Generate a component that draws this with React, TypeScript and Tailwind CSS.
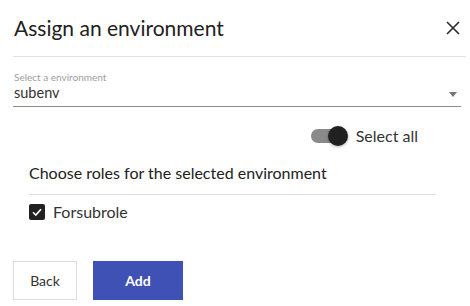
import React from "react";

const App: React.FC = () => {
  return (
    <div
      className="w-[470px] h-[306px] bg-white overflow-hidden text-[#222]"
      style={{ fontFamily: "Lato, 'Open Sans', sans-serif" }}
    >
      {/* header */}
      <div className="ml-[13px] mr-[4px] h-[57px] flex items-center justify-between border-b border-[#e3e3e3]">
        <h1 className="pl-[1px] text-[21px] leading-[28px] text-[#212121]">Assign an environment</h1>
        <button className="mr-[6px] w-[14px] h-[14px] flex items-center justify-center text-[#2b2b2b]">
          <svg width="14" height="14" viewBox="0 0 14 14" fill="none">
            <path d="M1 1L13 13M13 1L1 13" stroke="currentColor" strokeWidth="1.6" />
          </svg>
        </button>
      </div>

      {/* select */}
      <div className="ml-[13px] mr-[9px] mt-[14px]">
        <div className="pl-[1px] text-[10px] leading-[12px] text-[#9e9e9e]">Select a environment</div>
        <div className="h-[24px] flex items-start justify-between border-b border-[#8c8c8c]">
          <span className="pl-[1px] text-[14.5px] leading-[20px] text-[#333]">subenv</span>
          <span className="mt-[9px] mr-[4px] w-0 h-0 border-l-[4.5px] border-r-[4.5px] border-t-[5px] border-l-transparent border-r-transparent border-t-[#757575]" />
        </div>
      </div>

      {/* select all */}
      <div className="mt-[17px] h-[24px] flex items-center justify-end pr-[52px] gap-[8px]">
        <div className="relative w-[37px] h-[20px] flex items-center">
          <div className="w-[32px] h-[14px] rounded-full bg-[#8a8a8a]" />
          <div className="absolute right-0 top-0 w-[20px] h-[20px] rounded-full bg-[#212121] shadow-[0_1px_3px_rgba(0,0,0,0.3)]" />
        </div>
        <span className="text-[16px] leading-[20px] text-[#333]">Select all</span>
      </div>

      {/* roles */}
      <div className="ml-[29px] w-[407px] mt-[13px]">
        <div className="text-[16px] leading-[24px] pb-[9px] border-b border-[#e0e0e0] text-[#212121]">
          Choose roles for the selected environment
        </div>
        <label className="mt-[5px] h-[24px] flex items-center gap-[8px]">
          <span className="w-[16px] h-[16px] rounded-[2px] bg-[#212121] flex items-center justify-center">
            <svg width="12" height="12" viewBox="0 0 12 12" fill="none">
              <path d="M2 6.2L4.8 9L10 3.2" stroke="white" strokeWidth="1.6" />
            </svg>
          </span>
          <span className="text-[16px] leading-[20px] text-[#333]">Forsubrole</span>
        </label>
      </div>

      {/* actions */}
      <div className="ml-[13px] mt-[37px] flex gap-[16px]">
        <button className="w-[64px] h-[39px] border border-[#dcdcdc] text-[14px] text-[#333]">Back</button>
        <button className="w-[90px] h-[39px] bg-[#3f51b5] text-[14px] font-bold text-white">Add</button>
      </div>
    </div>
  );
};

export default App;
